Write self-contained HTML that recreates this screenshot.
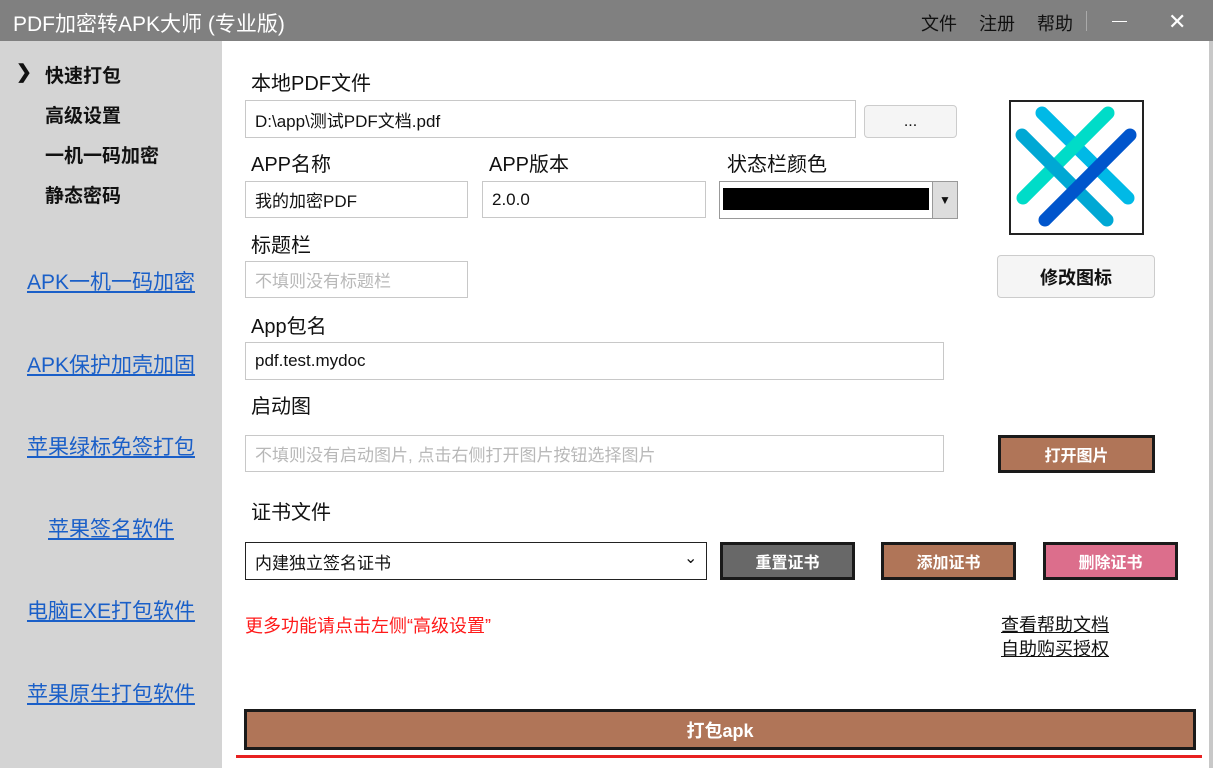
<!DOCTYPE html>
<html><head><meta charset="utf-8"><style>
*{box-sizing:border-box;margin:0;padding:0}
body{width:1213px;height:768px;position:relative;overflow:hidden;background:#fff;font-family:"Liberation Sans","Noto Sans CJK SC",sans-serif;color:#111}
.a{position:absolute;white-space:nowrap}
.title{left:0;top:0;width:1213px;height:41px;background:#808080}
.side{left:0;top:41px;width:222px;height:727px;background:#d4d4d4}
.lbl{font-size:20px}
.inp{border:1px solid #c8c8c8;background:#fff;font-size:17px;padding-left:9px;display:flex;align-items:center}
.ph{color:#b8b8b8}
.nav{font-size:19px;font-weight:bold}
.lnk{font-size:21px;color:#1a5fc8;text-decoration:underline;text-align:center;width:222px;left:0}
.btn{border:3px solid #1a1a1a;color:#fff;font-size:16px;font-weight:bold;display:flex;align-items:center;justify-content:center}
.gb{border:1px solid #ccc;border-radius:4px;background:#f5f5f5;display:flex;align-items:center;justify-content:center}
</style></head><body>
<div class="a title"></div>
<div class="a" style="left:13px;top:8px;font-size:21px;color:#fff">PDF加密转APK大师 (专业版)</div>
<div class="a" style="left:921px;top:10px;font-size:18px;color:#111">文件</div>
<div class="a" style="left:979px;top:10px;font-size:18px;color:#111">注册</div>
<div class="a" style="left:1037px;top:10px;font-size:18px;color:#111">帮助</div>
<div class="a" style="left:1086px;top:11px;width:1px;height:20px;background:#aaa"></div>
<div class="a" style="left:1112px;top:21px;width:15px;height:1px;background:#fff"></div>
<div class="a" style="left:1168px;top:9px;font-size:22px;color:#fff">✕</div>
<div class="a side"></div>
<div class="a" style="left:1209px;top:41px;width:4px;height:727px;background:#c8c8c8"></div>
<div class="a nav" style="left:16px;top:61px">❯</div>
<div class="a nav" style="left:45px;top:61px">快速打包</div>
<div class="a nav" style="left:45px;top:101px">高级设置</div>
<div class="a nav" style="left:45px;top:141px">一机一码加密</div>
<div class="a nav" style="left:45px;top:181px">静态密码</div>
<div class="a lnk" style="top:266px">APK一机一码加密</div>
<div class="a lnk" style="top:349px">APK保护加壳加固</div>
<div class="a lnk" style="top:431px">苹果绿标免签打包</div>
<div class="a lnk" style="top:513px">苹果签名软件</div>
<div class="a lnk" style="top:595px">电脑EXE打包软件</div>
<div class="a lnk" style="top:678px">苹果原生打包软件</div>

<div class="a lbl" style="left:251px;top:67px">本地PDF文件</div>
<div class="a inp" style="left:245px;top:100px;width:611px;height:38px">D:\app\测试PDF文档.pdf</div>
<div class="a gb" style="left:864px;top:105px;width:93px;height:33px;font-size:16px">...</div>
<div class="a lbl" style="left:251px;top:148px">APP名称</div>
<div class="a lbl" style="left:489px;top:148px">APP版本</div>
<div class="a lbl" style="left:727px;top:148px">状态栏颜色</div>
<div class="a inp" style="left:245px;top:181px;width:223px;height:37px">我的加密PDF</div>
<div class="a inp" style="left:482px;top:181px;width:224px;height:37px">2.0.0</div>
<div class="a" style="left:719px;top:181px;width:239px;height:38px;border:1px solid #999;background:#fff"></div>
<div class="a" style="left:723px;top:188px;width:206px;height:22px;background:#000"></div>
<div class="a" style="left:932px;top:181px;width:26px;height:38px;background:#ddd;border:1px solid #999;font-size:12px;display:flex;align-items:center;justify-content:center">▼</div>
<div class="a lbl" style="left:251px;top:229px">标题栏</div>
<div class="a inp ph" style="left:245px;top:261px;width:223px;height:37px">不填则没有标题栏</div>
<div class="a lbl" style="left:251px;top:310px">App包名</div>
<div class="a inp" style="left:245px;top:342px;width:699px;height:38px">pdf.test.mydoc</div>
<div class="a lbl" style="left:251px;top:390px">启动图</div>
<div class="a inp ph" style="left:245px;top:435px;width:699px;height:37px">不填则没有启动图片, 点击右侧打开图片按钮选择图片</div>
<div class="a btn" style="left:998px;top:435px;width:157px;height:38px;background:#b07558">打开图片</div>
<div class="a lbl" style="left:251px;top:496px">证书文件</div>
<div class="a inp" style="left:245px;top:542px;width:462px;height:38px;border-color:#222">内建独立签名证书</div>
<div class="a" style="left:684px;top:548px;font-size:16px">⌄</div>
<div class="a btn" style="left:720px;top:542px;width:135px;height:38px;background:#686868">重置证书</div>
<div class="a btn" style="left:881px;top:542px;width:135px;height:38px;background:#b07558">添加证书</div>
<div class="a btn" style="left:1043px;top:542px;width:135px;height:38px;background:#dc6e8c">删除证书</div>
<div class="a" style="left:245px;top:612px;font-size:18px;color:#ff1a1a">更多功能请点击左侧“高级设置”</div>
<div class="a" style="left:1001px;top:611px;font-size:18px;text-decoration:underline">查看帮助文档</div>
<div class="a" style="left:1001px;top:635px;font-size:18px;text-decoration:underline">自助购买授权</div>
<div class="a btn" style="left:244px;top:709px;width:952px;height:41px;background:#b07558;font-size:18px">打包apk</div>
<div class="a" style="left:236px;top:755px;width:966px;height:3px;background:#e82020"></div>

<div class="a" style="left:1009px;top:100px;width:135px;height:135px;border:2px solid #222;background:#fff"></div>
<svg class="a" style="left:0;top:0" width="1213" height="768">
<g stroke-linecap="round" stroke-width="13" fill="none">
<line x1="1042" y1="113" x2="1128" y2="198" stroke="#00b9e6"/>
<line x1="1108" y1="113" x2="1023" y2="198" stroke="#00dcc8"/>
<line x1="1022" y1="135" x2="1107" y2="220" stroke="#00a8d4"/>
<line x1="1130" y1="135" x2="1045" y2="220" stroke="#0055cc"/>
</g></svg>
<div class="a gb" style="left:997px;top:255px;width:158px;height:43px;font-size:18px;font-weight:bold">修改图标</div>
</body></html>
